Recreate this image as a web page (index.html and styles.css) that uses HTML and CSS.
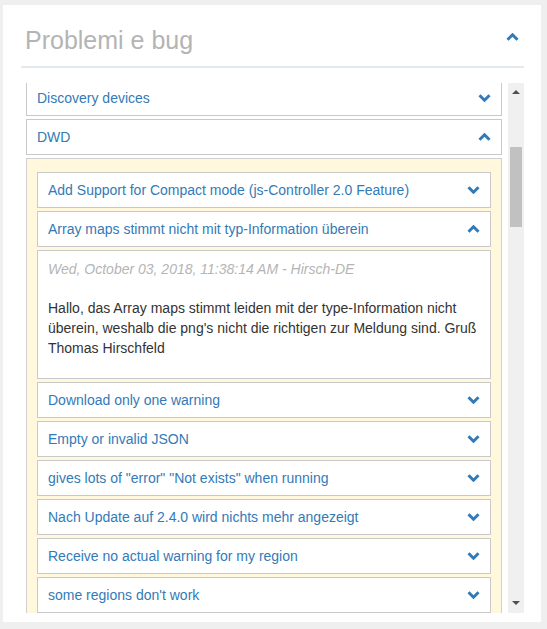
FILE: index.html
```html
<!DOCTYPE html>
<html lang="it">
<head>
<meta charset="utf-8">
<title>Problemi e bug</title>
<link rel="stylesheet" href="styles.css">
</head>
<body>
<div class="card">
  <div class="card-head">
    <h2 class="card-title">Problemi e bug</h2>
    <svg class="chev chev-head" viewBox="0 0 13 8" width="13" height="8"><polyline points="1.5,6.8 6.5,1.8 11.5,6.8"/></svg>
  </div>
  <div class="scroller">
    <div class="viewport">
      <div class="list">
        <div class="item"><span class="item-title">Discovery devices</span><svg class="chev" viewBox="0 0 13 8" width="13" height="8"><polyline points="1.5,1.2 6.5,6.2 11.5,1.2"/></svg></div>
        <div class="item"><span class="item-title">DWD</span><svg class="chev" viewBox="0 0 13 8" width="13" height="8"><polyline points="1.5,6.8 6.5,1.8 11.5,6.8"/></svg></div>
        <div class="panel">
          <div class="item"><span class="item-title">Add Support for Compact mode (js-Controller 2.0 Feature)</span><svg class="chev" viewBox="0 0 13 8" width="13" height="8"><polyline points="1.5,1.2 6.5,6.2 11.5,1.2"/></svg></div>
          <div class="item"><span class="item-title">Array maps stimmt nicht mit typ-Information überein</span><svg class="chev" viewBox="0 0 13 8" width="13" height="8"><polyline points="1.5,6.8 6.5,1.8 11.5,6.8"/></svg></div>
          <div class="issue-body">
            <div class="issue-date">Wed, October 03, 2018, 11:38:14 AM - Hirsch-DE</div>
            <p class="issue-text">Hallo, das Array maps stimmt leiden mit der type-Information nicht überein, weshalb die png's nicht die richtigen zur Meldung sind. Gruß Thomas Hirschfeld</p>
          </div>
          <div class="item"><span class="item-title">Download only one warning</span><svg class="chev" viewBox="0 0 13 8" width="13" height="8"><polyline points="1.5,1.2 6.5,6.2 11.5,1.2"/></svg></div>
          <div class="item"><span class="item-title">Empty or invalid JSON</span><svg class="chev" viewBox="0 0 13 8" width="13" height="8"><polyline points="1.5,1.2 6.5,6.2 11.5,1.2"/></svg></div>
          <div class="item"><span class="item-title">gives lots of "error" "Not exists" when running</span><svg class="chev" viewBox="0 0 13 8" width="13" height="8"><polyline points="1.5,1.2 6.5,6.2 11.5,1.2"/></svg></div>
          <div class="item"><span class="item-title">Nach Update auf 2.4.0 wird nichts mehr angezeigt</span><svg class="chev" viewBox="0 0 13 8" width="13" height="8"><polyline points="1.5,1.2 6.5,6.2 11.5,1.2"/></svg></div>
          <div class="item"><span class="item-title">Receive no actual warning for my region</span><svg class="chev" viewBox="0 0 13 8" width="13" height="8"><polyline points="1.5,1.2 6.5,6.2 11.5,1.2"/></svg></div>
          <div class="item"><span class="item-title">some regions don't work</span><svg class="chev" viewBox="0 0 13 8" width="13" height="8"><polyline points="1.5,1.2 6.5,6.2 11.5,1.2"/></svg></div>
        </div>
      </div>
    </div>
    <div class="scrollbar">
      <div class="sb-btn sb-up"><span class="tri tri-up"></span></div>
      <div class="sb-track"><div class="sb-thumb"></div></div>
      <div class="sb-btn sb-down"><span class="tri tri-down"></span></div>
    </div>
  </div>
</div>
</body>
</html>
```
FILE: styles.css
```css
* { box-sizing: border-box; }

html, body { height: 100%; }

body {
  margin: 0;
  padding: 5px 6px 7px 3px;
  background: #efefef;
  font-family: "Liberation Sans", Arial, sans-serif;
  font-size: 14px;
  color: #333;
}

.card {
  background: #fff;
  padding: 0 17px 9px 18px;
}

.card-head {
  display: flex;
  justify-content: space-between;
  align-items: flex-start;
  padding: 20px 5px 11px 4px;
  border-bottom: 2px solid #e4e9ee;
  margin-bottom: 15px;
}

.card-title {
  margin: 0;
  font-size: 25px;
  line-height: 30px;
  font-weight: normal;
  color: #b4b4b4;
}

.chev {
  display: block;
  flex: none;
  fill: none;
  stroke: #337ab7;
  stroke-width: 3;
  stroke-linecap: butt;
  stroke-linejoin: miter;
}

.chev-head {
  margin-top: 8px;
}

.scroller {
  display: flex;
  height: 530px;
}

.viewport {
  flex: 1;
  overflow: hidden;
  padding: 0 6px 0 5px;
}

.list {
  margin-top: -3px;
}

.item {
  display: flex;
  align-items: center;
  justify-content: space-between;
  height: 36px;
  padding: 0 10px;
  margin-bottom: 3px;
  border: 1px solid #c9c9c9;
  background: #fff;
  color: #337ab7;
  line-height: 20px;
}

.item .chev {
  margin-top: -1px;
}

.panel {
  background: #fff8dc;
  border: 1px solid #cfcfcf;
  border-bottom: none;
  padding: 13px 10px 0;
}

.issue-body {
  border: 1px solid #c9c9c9;
  background: #fff;
  padding: 8px 10px 20px;
  margin-bottom: 3px;
  line-height: 20px;
}

.issue-date {
  font-style: italic;
  color: #b5b5b5;
}

.issue-text {
  margin: 19px 0 0;
  color: #333;
}

.scrollbar {
  flex: none;
  width: 16px;
  display: flex;
  flex-direction: column;
  background: #f0f0f0;
}

.sb-btn {
  height: 17px;
  display: flex;
  justify-content: center;
  align-items: flex-start;
}

.sb-up { padding-top: 7px; }
.sb-down { padding-top: 5px; }

.tri {
  width: 0;
  height: 0;
  border-left: 4px solid transparent;
  border-right: 4px solid transparent;
}

.tri-up { border-bottom: 4px solid #505050; }
.tri-down { border-top: 4px solid #505050; }

.sb-track {
  flex: 1;
  padding: 47px 2px 0;
}

.sb-thumb {
  height: 80px;
  background: #c1c1c1;
}
```
